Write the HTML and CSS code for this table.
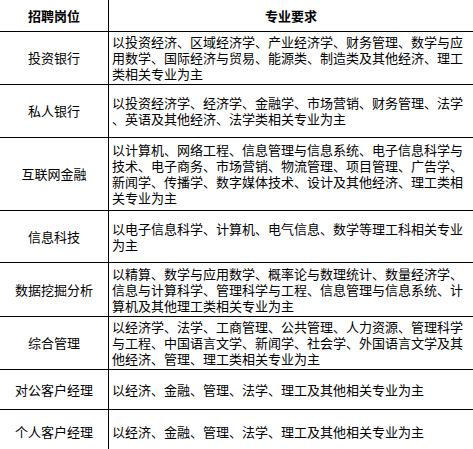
FILE: index.html
```html
<!DOCTYPE html>
<html lang="zh-CN">
<head>
<meta charset="utf-8">
<link rel="stylesheet" href="styles.css">
</head>
<body>
<div class="grid">
  <div class="cell pos head">招聘岗位</div>
  <div class="cell req head center">专业要求</div>

  <div class="cell pos">投资银行</div>
  <div class="cell req">以投资经济、区域经济学、产业经济学、财务管理、数学与应<br>用数学、国际经济与贸易、能源类、制造类及其他经济、理工<br>类相关专业为主</div>

  <div class="cell pos">私人银行</div>
  <div class="cell req">以投资经济学、经济学、金融学、市场营销、财务管理、法学<br>、英语及其他经济、法学类相关专业为主</div>

  <div class="cell pos">互联网金融</div>
  <div class="cell req">以计算机、网络工程、信息管理与信息系统、电子信息科学与<br>技术、电子商务、市场营销、物流管理、项目管理、广告学、<br>新闻学、传播学、数字媒体技术、设计及其他经济、理工类相<br>关专业为主</div>

  <div class="cell pos">信息科技</div>
  <div class="cell req">以电子信息科学、计算机、电气信息、数学等理工科相关专业<br>为主</div>

  <div class="cell pos">数据挖掘分析</div>
  <div class="cell req">以精算、数学与应用数学、概率论与数理统计、数量经济学、<br>信息与计算科学、管理科学与工程、信息管理与信息系统、计<br>算机及其他理工类相关专业为主</div>

  <div class="cell pos">综合管理</div>
  <div class="cell req">以经济学、法学、工商管理、公共管理、人力资源、管理科学<br>与工程、中国语言文学、新闻学、社会学、外国语言文学及其<br>他经济、管理、理工类相关专业为主</div>

  <div class="cell pos">对公客户经理</div>
  <div class="cell req">以经济、金融、管理、法学、理工及其他相关专业为主</div>

  <div class="cell pos">个人客户经理</div>
  <div class="cell req">以经济、金融、管理、法学、理工及其他相关专业为主</div>
</div>
</body>
</html>
```

FILE: styles.css
```css
html, body {
  margin: 0;
  padding: 0;
  background: #fff;
}
body {
  font-family: "Noto Sans CJK SC", "Noto Sans", sans-serif;
  font-size: 13px;
  line-height: 16px;
  color: #000;
  overflow: hidden;
}
.grid {
  display: grid;
  width: 473px;
  grid-template-columns: 108px 1fr;
  grid-template-rows: 32px 53px 53px 73px 52px 54px 53px 40px 44px;
}
.cell {
  box-sizing: border-box;
  border-bottom: 1px solid #000;
  display: flex;
  align-items: center;
  white-space: nowrap;
}
.pos {
  justify-content: center;
  text-align: center;
}
.req {
  border-left: 1px solid #000;
  padding-left: 3px;
}
.head {
  font-weight: bold;
}
.center {
  justify-content: center;
  padding-left: 0;
}
```
